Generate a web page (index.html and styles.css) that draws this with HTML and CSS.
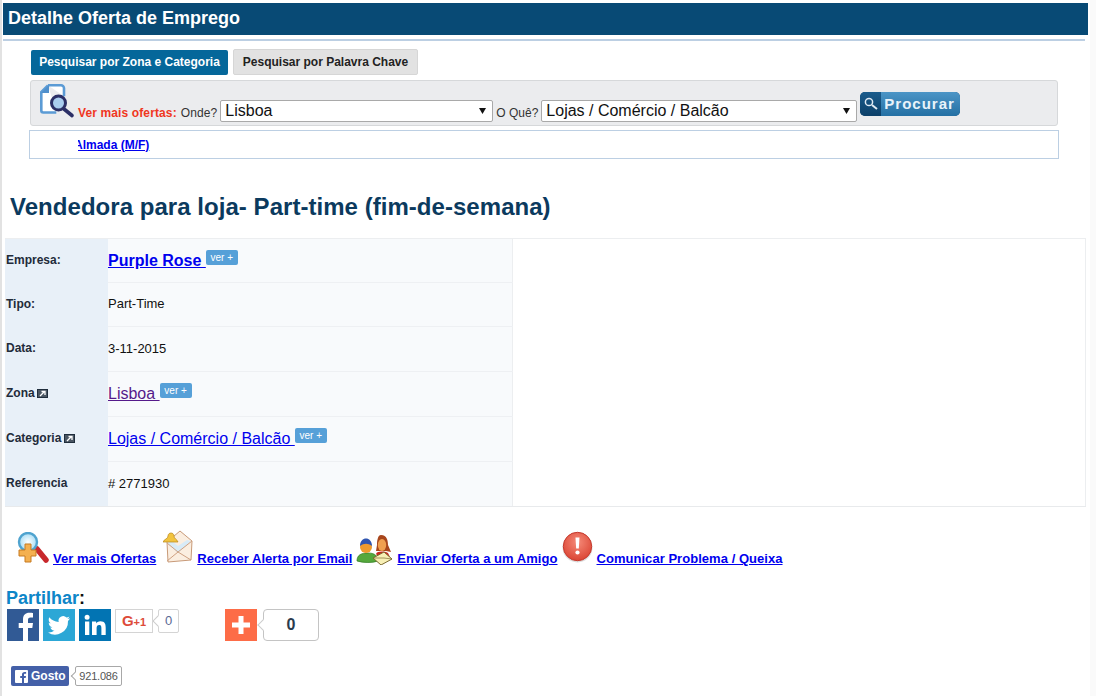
FILE: index.html
```html
<!DOCTYPE html>
<html lang="pt">
<head>
<meta charset="utf-8">
<title>Detalhe Oferta de Emprego</title>
<link rel="stylesheet" href="styles.css">
</head>
<body>
<div class="page">
  <header class="head">Detalhe Oferta de Emprego</header>
  <div class="rule"></div>

  <section class="search">
    <nav class="tabs">
      <a class="tab tab-on">Pesquisar por Zona e Categoria</a>
      <a class="tab tab-off">Pesquisar por Palavra Chave</a>
    </nav>
    <form class="bar">
      <svg class="bar-icon" width="36" height="36" viewBox="0 0 36 36">
        <path d="M8 2.300h13a3 3 0 0 1 3 3v8M8 2.300L1.300 9v18.500a2 2 0 0 0 2 2h13" fill="#fff" stroke="#5b9bd5" stroke-width="2.600"/>
        <path d="M9 2v8H1z" fill="#4f8fcc"/>
        <circle cx="18.500" cy="20" r="7" fill="#a9cdee" stroke="#2b2f66" stroke-width="3"/>
        <path d="M24 26l8 6.500" stroke="#2b2f66" stroke-width="3.600" stroke-linecap="round"/>
      </svg>
      <b class="more">Ver mais ofertas:</b>
      <label class="lbl" for="onde">Onde?</label>
      <select id="onde" class="sel sel-a"><option>Lisboa</option></select>
      <label class="lbl" for="oque">O Quê?</label>
      <select id="oque" class="sel sel-b"><option>Lojas / Comércio / Balcão</option></select>
      <button class="go" type="button">
        <span class="go-icon">
          <svg width="16" height="16" viewBox="0 0 16 16"><circle cx="6" cy="6" r="3.600" fill="none" stroke="#dfeaf4" stroke-width="1.500"/><path d="M9 9l5 4" stroke="#dfeaf4" stroke-width="2"/></svg>
        </span>
        <span class="go-text">Procurar</span>
      </button>
    </form>
    <div class="ticker"><div class="ticker-clip"><a href="#" class="ticker-link">Almada (M/F)</a></div></div>
  </section>

  <h1 class="title">Vendedora para loja- Part-time (fim-de-semana)</h1>

  <div class="detail">
    <table class="info">
      <tr class="r43"><th>Empresa:</th><td><a href="#" class="big"><b>Purple Rose </b></a><span class="ver">ver +</span></td></tr>
      <tr class="r44"><th>Tipo:</th><td>Part-Time</td></tr>
      <tr class="r45"><th>Data:</th><td>3-11-2015</td></tr>
      <tr class="r45"><th>Zona <svg class="ext" width="11" height="9" viewBox="0 0 11 9"><rect width="11" height="9" fill="#1f2d3c"/><rect x="1" y="1" width="9" height="7" fill="#4a5663"/><path d="M3 7l4-4M4.500 2.500H8V6" stroke="#fff" stroke-width="1.300" fill="none"/></svg></th><td><a href="#" class="big visited">Lisboa </a><span class="ver">ver +</span></td></tr>
      <tr class="r45"><th>Categoria <svg class="ext" width="11" height="9" viewBox="0 0 11 9"><rect width="11" height="9" fill="#1f2d3c"/><rect x="1" y="1" width="9" height="7" fill="#4a5663"/><path d="M3 7l4-4M4.500 2.500H8V6" stroke="#fff" stroke-width="1.300" fill="none"/></svg></th><td><a href="#" class="big">Lojas / Comércio / Balcão </a><span class="ver">ver +</span></td></tr>
      <tr class="r45"><th>Referencia</th><td># 2771930</td></tr>
    </table>
    <div class="detail-side"></div>
  </div>

  <div class="actions">
    <svg class="ai" width="32" height="34" viewBox="0 0 32 34">
      <defs>
        <radialGradient id="lens"><stop offset="0" stop-color="#ffffff"/><stop offset="1" stop-color="#a8dcf4"/></radialGradient>
        <radialGradient id="alert" cx=".5" cy=".35" r=".7"><stop offset="0" stop-color="#f58a78"/><stop offset="1" stop-color="#d9402f"/></radialGradient>
      </defs>
      <path d="M20 17l9 11" stroke="#c8282c" stroke-width="5.500" stroke-linecap="round"/>
      <circle cx="11" cy="10" r="9" fill="url(#lens)" stroke="#4fa3cf" stroke-width="2.400"/>
      <path d="M8 12h6v6h5v6h-5v6H8v-6H2v-6h6z" fill="#f4b050" stroke="#c77a20"/>
    </svg><a href="#" class="act">Ver mais Ofertas</a>
    <svg class="ai ai2" width="30" height="34" viewBox="0 0 30 34">
      <path d="M4 12L17 1l12 10-1 19-23 2z" fill="#fbeee0" stroke="#c89a78"/>
      <path d="M4 13l11 10 13-12-4-1-9 6-6-5z" fill="#d8ebf7"/>
      <path d="M4 31l11-9 13 8M4 13l11 9 14-11" fill="none" stroke="#cfa182"/>
      <path d="M5 6c0-4 6-4 6 0 0 3 3 3 4 6H0c1-3 5-3 5-6z" fill="#f2c33e" stroke="#b8861b" stroke-width=".7"/>
    </svg><a href="#" class="act">Receber Alerta por Email</a>
    <svg class="ai ai3" width="37" height="31" viewBox="0 0 37 31">
      <path d="M20 20c1-3 8-3 12-1l2 4-8 4z" fill="#c8281e"/>
      <path d="M25 1c6 0 7 6 7 10l3 7-5-1H20l1-6c0-5 1-10 4-10z" fill="#a8461c"/>
      <ellipse cx="26" cy="11" rx="4.200" ry="6" fill="#f0a050"/>
      <path d="M1 27c0-6 4-8 11-8s10 3 10 8c-5 2-15 2-21 0z" fill="#55a83c" stroke="#2e7a20" stroke-width=".7"/>
      <circle cx="10" cy="13" r="6" fill="#ee9a2e"/>
      <path d="M4 12c0-10 12-10 12 0-4-3-8-3-12 0z" fill="#2f55b0"/>
      <path d="M17 24l11-6 8 7-11 6z" fill="#f7efb5" stroke="#7c6a30"/>
      <path d="M17 24l11 0 8 1" fill="none" stroke="#7c6a30" stroke-width=".7"/>
    </svg><a href="#" class="act">Enviar Oferta a um Amigo</a>
    <svg class="ai ai4" width="32" height="32" viewBox="0 0 32 32">
      <circle cx="15.500" cy="16.500" r="15" fill="#dcdcdc"/>
      <circle cx="15.500" cy="15.500" r="14.200" fill="url(#alert)" stroke="#c63a2e"/>
      <path d="M13.500 6.500h4l-.7 11h-2.600z" fill="#fff"/>
      <circle cx="15.500" cy="21.500" r="2.100" fill="#fff"/>
    </svg><a href="#" class="act act4">Comunicar Problema / Queixa</a>
  </div>

  <h2 class="share">Partilhar<span class="colon">:</span></h2>
  <div class="social">
    <a class="sq sq-f"><svg width="32" height="32" viewBox="0 0 32 32"><path d="M21 32V19h4.300l.7-5h-5v-3c0-1.500.5-2.500 2.500-2.500H26V4c-.6-.1-2-.2-3.700-.2-3.800 0-6.300 2.300-6.300 6.400V14h-4.300v5H16v13z" fill="#fff"/></svg></a>
    <a class="sq sq-t"><svg width="32" height="32" viewBox="0 0 32 32"><path d="M27 9.300c-.8.400-1.700.6-2.600.7.900-.6 1.600-1.400 2-2.500-.9.500-1.900.9-2.900 1.100A4.600 4.600 0 0 0 15.700 13c-3.800-.2-7.200-2-9.400-4.800-1.200 2.100-.6 4.800 1.400 6.100-.7 0-1.400-.2-2-.6 0 2.200 1.500 4.100 3.600 4.600-.7.200-1.400.2-2 .1.600 1.800 2.300 3.100 4.200 3.200A9.300 9.300 0 0 1 5 23.500 13 13 0 0 0 25 12c.8-.7 1.500-1.600 2-2.700z" fill="#fff"/></svg></a>
    <a class="sq sq-l"><svg width="32" height="32" viewBox="0 0 32 32"><path d="M6 12.500h4.300V26H6zM8.100 5.800a2.500 2.500 0 1 1 0 5 2.500 2.500 0 0 1 0-5zM13 12.500h4.100v1.900c.7-1.200 2.200-2.200 4.300-2.200 4.500 0 5.300 2.800 5.300 6.600V26h-4.300v-6.300c0-1.700 0-3.700-2.200-3.700s-2.600 1.700-2.600 3.500V26H13z" fill="#fff"/></svg></a>
    <a class="gplus"><span class="g">G</span><span class="p">+1</span></a>
    <span class="gcount">0</span>
    <a class="sq sq-add"><svg width="32" height="32" viewBox="0 0 32 32"><path d="M13.500 7h5v6.500H25v5h-6.500V25h-5v-6.500H7v-5h6.500z" fill="#fff"/></svg></a>
    <span class="addcount">0</span>
  </div>

  <div class="like">
    <a class="fb"><svg width="13" height="13" viewBox="0 0 13 13"><path d="M1 0h11a1 1 0 0 1 1 1v11a1 1 0 0 1-1 1H9V8h1.700l.3-2H9V4.800c0-.6.200-1 1-1h1.100V2c-.3 0-.9-.1-1.500-.1C8 1.900 7 2.800 7 4.500V6H5.200v2H7v5H1a1 1 0 0 1-1-1V1a1 1 0 0 1 1-1z" fill="#fff"/></svg>Gosto</a>
    <span class="fbcount">921.086</span>
  </div>
</div>
</body>
</html>
```

FILE: styles.css
```css
html, body { margin: 0; background: #fafafa; }
body { font-family: "Liberation Sans", Arial, sans-serif; font-size: 12px; color: #111; overflow: hidden; }
a { color: #00e; }

.page { width: 1090px; height: 696px; box-sizing: border-box; padding: 3px 0 0 1px; border-left: 2px solid #e2e2e2; background: #fff; overflow: hidden; }

.head { height: 32px; margin-right: 2px; background: #084a75; color: #fff; font-size: 18px; font-weight: bold; line-height: 31px; padding-left: 5px; }
.rule { height: 2px; margin: 4px 5px 0 0; background: #bccfe3; }

.search { margin-left: 26px; width: 1030px; }
.tabs { display: flex; align-items: flex-end; gap: 5px; height: 27px; margin: 7px 0 0 2px; }
.tab { font-size: 12px; font-weight: bold; border-radius: 2px; box-sizing: border-box; display: block; }
.tab-on { background: #05679a; color: #fff; width: 197px; height: 25px; line-height: 24px; text-align: center; }
.tab-off { background: #e2e2e2; color: #222; width: 185px; height: 26px; line-height: 25px; text-align: center; border: 1px solid #d6d6d6; }

.bar { height: 46px; width: 1028px; margin: 5px 0 0 1px; box-sizing: border-box; background: #ebecee; border: 1px solid #d6d8da; border-radius: 3px; display: flex; align-items: flex-end; padding: 0 0 3px 9px; }
.bar-icon { margin: 0 2px 3px 0; align-self: flex-end; }
.more { color: #f0371e; font-size: 12px; letter-spacing: .12px; margin: 0 4px 2px 0; }
.lbl { font-size: 12px; color: #333; letter-spacing: .1px; margin: 0 3px 2px 0; }
.lbl[for=oque] { margin-left: 3px; letter-spacing: 0; }
.sel { appearance: none; height: 22px; box-sizing: border-box; background: #fff url("data:image/svg+xml,%3Csvg xmlns='http://www.w3.org/2000/svg' width='8' height='8'%3E%3Cpath d='M0 1h7L3.500 7z' fill='%23111'/%3E%3C/svg%3E") no-repeat right 5px center; border: 1px solid #a9a9a9; border-radius: 2px; font: 16px "Liberation Sans", Arial, sans-serif; color: #111; padding: 0 14px 2px 4px; }
.sel-a { width: 273px; }
.sel-b { width: 316px; }
.go { display: flex; align-items: stretch; width: 100px; height: 24px; padding: 0; margin: 0 0 6px 3px; border: 0; border-radius: 5px; overflow: hidden; background: #0e4a78; }
.go-icon { width: 21px; background: linear-gradient(#1a5c8c, #0c3f68); display: flex; align-items: center; justify-content: center; }
.go-text { flex: 1; background: linear-gradient(#4c95c6, #2470a4); color: #e9f3fa; font: bold 15px/23px "Liberation Sans", Arial, sans-serif; letter-spacing: 1px; text-align: left; padding-left: 3px; }

.ticker { width: 1030px; height: 29px; margin-top: 4px; box-sizing: border-box; border: 1px solid #bccfe3; padding-left: 48px; }
.ticker-clip { overflow: hidden; height: 27px; line-height: 29px; }
.ticker-link { font-weight: bold; font-size: 12px; margin-left: -4px; }

.title { margin: 34px 0 0 7px; font-size: 24px; line-height: 28px; font-weight: bold; color: #0b3a5e; letter-spacing: .04px; }

.detail { display: flex; margin: 17px 0 0 2px; width: 1081px; height: 269px; box-sizing: border-box; border-top: 1px solid #eceef0; border-bottom: 1px solid #e8eaec; }
.info { width: 508px; border-collapse: collapse; background: #f8fafc; border-right: 1px solid #eceef0; box-sizing: border-box; flex: none; }
.info th { width: 102px; text-align: left; background: #e8f0f8; color: #222b3a; font-size: 12px; font-weight: bold; padding: 0 0 1px 1px; }
.info td { font-size: 13px; color: #111; padding: 0 0 1px; border-bottom: 1px solid #eef0f3; }
.info tr:last-child td { border-bottom: 0; }
.r43 { height: 43px; }
.r44 { height: 44px; }
.r45 { height: 45px; }
.detail-side { flex: 1; border-right: 1px solid #eceef0; }
.big { font-size: 16px; }
.visited { color: #551a8b; }
.ver { display: inline-block; vertical-align: 5px; background: #56a0d8; color: #fff; font-size: 10px; line-height: 15px; height: 15px; width: 32px; text-align: center; border-radius: 2px; }
.ext { vertical-align: -1px; margin-left: -1px; }

.actions { display: flex; align-items: flex-end; margin: 24px 0 0 14px; height: 36px; white-space: nowrap; }
.act { font-size: 13px; font-weight: bold; letter-spacing: .04px; line-height: 15px; margin: 0 0 1px 4px; }
.ai { display: block; flex: none; margin-bottom: 1px; }
.ai2 { margin: 0 0 3px 7px; }
.ai3 { margin: 0 0 2px 4px; }
.ai4 { margin: 0 0 4px 4px; }
.act.act4 { margin-left: 3px; }

.share { margin: 22px 0 0 3px; font-size: 18px; line-height: 18px; font-weight: bold; color: #0d86c8; }
.colon { color: #111; }

.social { display: flex; align-items: flex-start; margin: 2px 0 0 4px; height: 32px; }
.sq { width: 32px; height: 32px; display: block; flex: none; margin-right: 4px; }
.sq svg { display: block; }
.sq-f { background: #315a95; }
.sq-t { background: #2ca7d6; }
.sq-l { background: #0274b3; }
.sq-add { background: #fd6c47; margin: 0 6px 0 46px; }
.gplus { width: 38px; height: 24px; box-sizing: border-box; border: 1px solid #d4d4d4; background: #fff; font: bold 15px/21px "Liberation Sans", Arial, sans-serif; color: #dd4b39; text-align: center; margin-right: 5px; }
.gplus .p { font-size: 11px; }
.gcount { width: 21px; height: 24px; box-sizing: border-box; border: 1px solid #d4d4d4; border-radius: 2px; color: #5a6a96; text-align: center; line-height: 21px; font-size: 13px; position: relative; }
.gcount::before, .addcount::before { content: ""; position: absolute; width: 7px; height: 7px; top: 50%; left: -5px; margin-top: -4px; background: #fff; border-left: 1px solid #ccc; border-bottom: 1px solid #ccc; transform: rotate(45deg); }
.addcount { width: 56px; height: 32px; box-sizing: border-box; border: 1px solid #c4c4c4; border-radius: 4px; font-size: 16px; font-weight: bold; color: #2a3b4d; text-align: center; line-height: 30px; position: relative; }

.like { display: flex; align-items: flex-start; margin: 25px 0 0 8px; }
.fb { display: flex; align-items: center; gap: 3px; box-sizing: border-box; width: 58px; height: 20px; padding-left: 4px; background: #4460a8; border-radius: 2px; color: #fff; font-size: 12px; font-weight: bold; }
.fbcount { box-sizing: border-box; width: 47px; height: 20px; margin-left: 6px; border: 1px solid #a8a8a8; border-radius: 2px; font-size: 11px; letter-spacing: -.2px; line-height: 18px; color: #555; text-align: center; position: relative; }
.fbcount::before { content: ""; position: absolute; width: 5px; height: 5px; top: 50%; left: -4px; margin-top: -3px; background: #fff; border-left: 1px solid #a8a8a8; border-bottom: 1px solid #a8a8a8; transform: rotate(45deg); }
```
